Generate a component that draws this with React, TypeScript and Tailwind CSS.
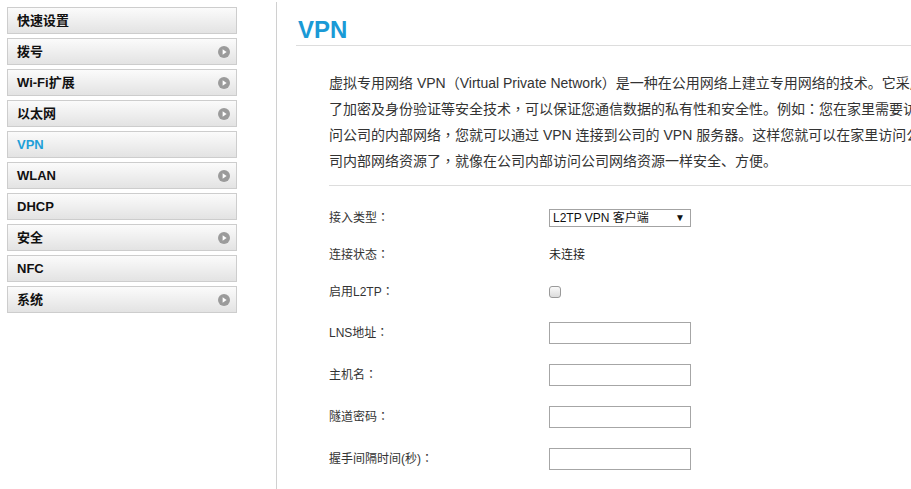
import React from "react";

const navItems: { label: string; arrow: boolean; active?: boolean }[] = [
  { label: "快速设置", arrow: false },
  { label: "拨号", arrow: true },
  { label: "Wi-Fi扩展", arrow: true },
  { label: "以太网", arrow: true },
  { label: "VPN", arrow: false, active: true },
  { label: "WLAN", arrow: true },
  { label: "DHCP", arrow: false },
  { label: "安全", arrow: true },
  { label: "NFC", arrow: false },
  { label: "系统", arrow: true },
];

const Arrow = () => (
  <svg width="12" height="12" viewBox="0 0 12 12">
    <circle cx="6" cy="6" r="6" fill="#9b9b9b" />
    <polygon points="4.6,3.3 8.6,6 4.6,8.7" fill="#ffffff" />
  </svg>
);

const font = "font-['Liberation_Sans','Noto_Sans_CJK_SC',sans-serif]";

const P = ({ t }: { t: string }) => (
  <>
    {t.split(/([，：（）])/).map((s, i) =>
      /^[，：（）]$/.test(s) ? (
        <span key={i} className="font-['Noto_Sans_CJK_TC',sans-serif] leading-[0]">
          {s}
        </span>
      ) : (
        <React.Fragment key={i}>{s}</React.Fragment>
      )
    )}
  </>
);

export default function App() {
  const lines = [
    "虚拟专用网络 VPN（Virtual Private Network）是一种在公用网络上建立专用网络的技术。它采用",
    "了加密及身份验证等安全技术，可以保证您通信数据的私有性和安全性。例如：您在家里需要访",
    "问公司的内部网络，您就可以通过 VPN 连接到公司的 VPN 服务器。这样您就可以在家里访问公",
    "司内部网络资源了，就像在公司内部访问公司网络资源一样安全、方便。",
  ];
  return (
    <div className={`flex min-h-[489px] w-[911px] overflow-hidden bg-white ${font}`}>
      <div className="w-[276px] shrink-0 pl-[7px] pt-[7px]">
        {navItems.map((it) => (
          <div
            key={it.label}
            className="mb-[4px] flex h-[27px] w-[230px] items-center justify-between border border-[#cdcdcd] bg-gradient-to-b from-[#fbfbfb] to-[#e3e3e3] pl-[9px] pr-[6px]"
          >
            <span
              className={`text-[13px] font-bold leading-none ${it.active ? "text-[#1e9fd8]" : "text-[#111]"}`}
            >
              {it.label}
            </span>
            {it.arrow && <Arrow />}
          </div>
        ))}
      </div>
      <div className="mt-[2px] w-px shrink-0 bg-[#d0d0d0]" />
      <div className="min-w-0 flex-1 pl-[19px] pt-[14px]">
        <div className="border-b border-[#dddddd] pl-[2px] text-[24px] font-bold leading-[31px] text-[#1a9ad6]">
          VPN
        </div>
        <div className="pl-[33px]">
          <div className="mt-[24px] text-[14px] leading-[26px] text-[#333]">
            {lines.map((l, i) => (
              <div key={i} className="h-[26px] whitespace-nowrap">
                <P t={l} />
              </div>
            ))}
          </div>
          <div className="mt-[11px] h-px w-[700px] bg-[#dddddd]" />
          <div className="pt-[13px] text-[12px] text-[#333]">
            <div className="flex h-[37px] items-center">
              <div className="w-[220px]">
                <P t="接入类型：" />
              </div>
              <div className="flex h-[18px] w-[142px] items-center justify-between border border-[#a3a3a3] bg-white pl-[3px] pr-[5px] text-[12px] leading-none text-[#111]">
                <span>L2TP VPN 客户端</span>
                <span className="text-[10px]">▼</span>
              </div>
            </div>
            <div className="flex h-[37px] items-center">
              <div className="w-[220px]">
                <P t="连接状态：" />
              </div>
              <div className="text-[#222]">未连接</div>
            </div>
            <div className="flex h-[37px] items-center">
              <div className="w-[220px]">
                <P t="启用L2TP：" />
              </div>
              <div className="h-[12px] w-[12px] rounded-[3px] border border-[#9a9a9a] bg-gradient-to-b from-[#fafafa] to-[#dcdcdc]" />
            </div>
            <div className="mt-[2px]">
              {["LNS地址：", "主机名：", "隧道密码：", "握手间隔时间(秒)："].map((l) => (
                <div key={l} className="flex h-[42px] items-center">
                  <div className="w-[220px]">
                    <P t={l} />
                  </div>
                  <div className="h-[22px] w-[142px] border border-[#a6a6a6] bg-white" />
                </div>
              ))}
            </div>
          </div>
        </div>
      </div>
    </div>
  );
}
